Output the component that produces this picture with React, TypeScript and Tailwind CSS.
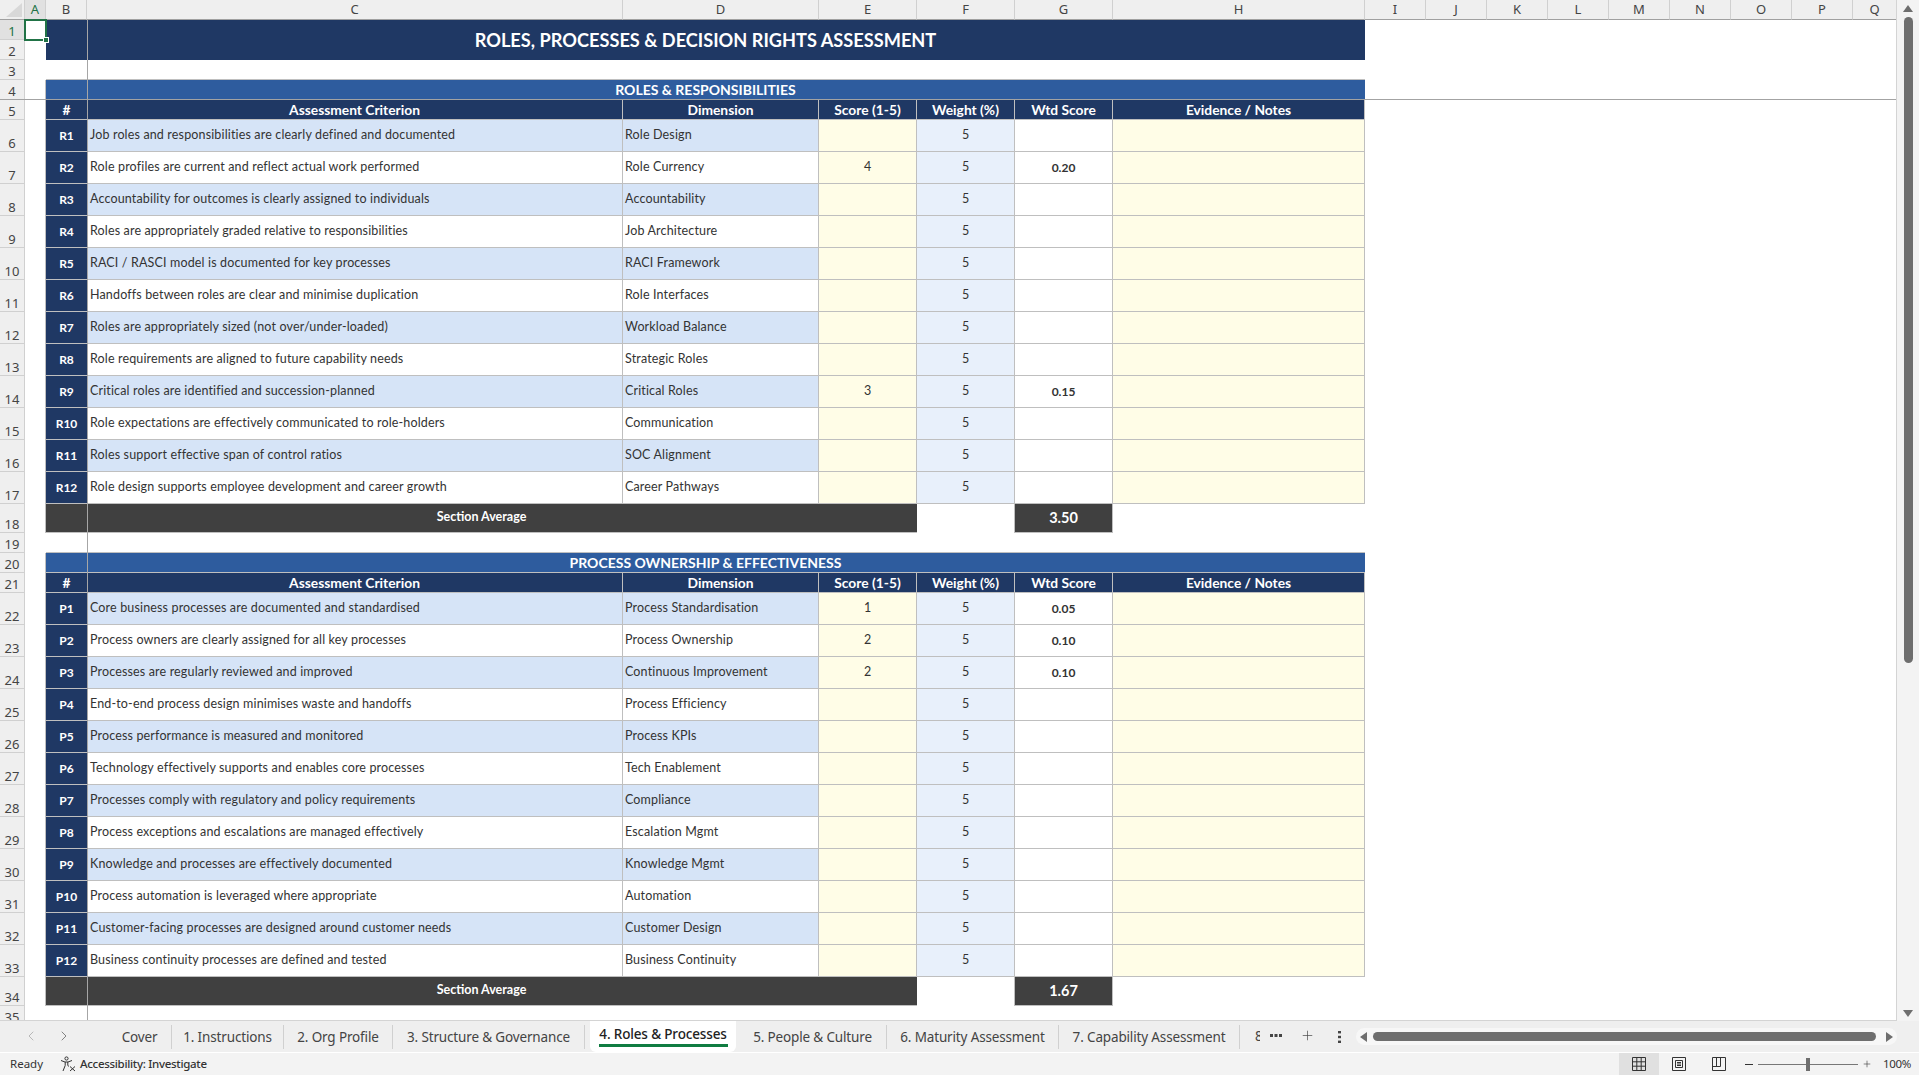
import { ChevronLeft, ChevronRight, Plus } from "lucide-react";

type Item = { id: string; criterion: string; dim: string; score?: number; wtd?: string };

const roles: Item[] = [
  { id: "R1", criterion: "Job roles and responsibilities are clearly defined and documented", dim: "Role Design" },
  { id: "R2", criterion: "Role profiles are current and reflect actual work performed", dim: "Role Currency", score: 4, wtd: "0.20" },
  { id: "R3", criterion: "Accountability for outcomes is clearly assigned to individuals", dim: "Accountability" },
  { id: "R4", criterion: "Roles are appropriately graded relative to responsibilities", dim: "Job Architecture" },
  { id: "R5", criterion: "RACI / RASCI model is documented for key processes", dim: "RACI Framework" },
  { id: "R6", criterion: "Handoffs between roles are clear and minimise duplication", dim: "Role Interfaces" },
  { id: "R7", criterion: "Roles are appropriately sized (not over/under-loaded)", dim: "Workload Balance" },
  { id: "R8", criterion: "Role requirements are aligned to future capability needs", dim: "Strategic Roles" },
  { id: "R9", criterion: "Critical roles are identified and succession-planned", dim: "Critical Roles", score: 3, wtd: "0.15" },
  { id: "R10", criterion: "Role expectations are effectively communicated to role-holders", dim: "Communication" },
  { id: "R11", criterion: "Roles support effective span of control ratios", dim: "SOC Alignment" },
  { id: "R12", criterion: "Role design supports employee development and career growth", dim: "Career Pathways" },
];

const processes: Item[] = [
  { id: "P1", criterion: "Core business processes are documented and standardised", dim: "Process Standardisation", score: 1, wtd: "0.05" },
  { id: "P2", criterion: "Process owners are clearly assigned for all key processes", dim: "Process Ownership", score: 2, wtd: "0.10" },
  { id: "P3", criterion: "Processes are regularly reviewed and improved", dim: "Continuous Improvement", score: 2, wtd: "0.10" },
  { id: "P4", criterion: "End-to-end process design minimises waste and handoffs", dim: "Process Efficiency" },
  { id: "P5", criterion: "Process performance is measured and monitored", dim: "Process KPIs" },
  { id: "P6", criterion: "Technology effectively supports and enables core processes", dim: "Tech Enablement" },
  { id: "P7", criterion: "Processes comply with regulatory and policy requirements", dim: "Compliance" },
  { id: "P8", criterion: "Process exceptions and escalations are managed effectively", dim: "Escalation Mgmt" },
  { id: "P9", criterion: "Knowledge and processes are effectively documented", dim: "Knowledge Mgmt" },
  { id: "P10", criterion: "Process automation is leveraged where appropriate", dim: "Automation" },
  { id: "P11", criterion: "Customer-facing processes are designed around customer needs", dim: "Customer Design" },
  { id: "P12", criterion: "Business continuity processes are defined and tested", dim: "Business Continuity" },
];

const headers = ["Assessment Criterion", "Dimension", "Score (1-5)", "Weight (%)", "Wtd Score", "Evidence / Notes"];

const tabs = [
  { label: "Cover", w: "w-[64px]" },
  { label: "1. Instructions", w: "w-[112px]" },
  { label: "2. Org Profile", w: "w-[109px]" },
  { label: "3. Structure & Governance", w: "w-[192px]" },
];
const tabsAfter = [
  { label: "5. People & Culture", w: "w-[148px]" },
  { label: "6. Maturity Assessment", w: "w-[172px]" },
  { label: "7. Capability Assessment", w: "w-[181px]" },
];

function RowHead({ n, h, active }: { n: number; h: string; active?: boolean }) {
  return (
    <div className={`${h} ${active ? "bg-[#e1e1e1] text-[#217346]" : "bg-[#efefef] text-[#444]"} flex items-end justify-center border-r border-b border-[#d0d0d0] text-[13px] leading-[16px] [font-family:'Noto_Sans',sans-serif] overflow-hidden`}>
      {n}
    </div>
  );
}

function Spacer({ n }: { n: number }) {
  return (
    <>
      <RowHead n={n} h="h-[20px]" />
      <div className="h-[20px]" />
      <div className="col-span-7 border-b border-[#bfbfbf]" />
      <div />
    </>
  );
}

function SectionTitle({ n, title }: { n: number; title: string }) {
  return (
    <>
      <RowHead n={n} h="h-[20px]" />
      <div className="h-[20px] border-r border-[#bfbfbf]" />
      <div className="col-span-7 bg-[#2e5c9e] flex items-center justify-center border-b border-[#bfbfbf] text-white font-bold text-[14px] leading-none">{title}</div>
      <div />
    </>
  );
}

function HeadRow({ n }: { n: number }) {
  return (
    <>
      <RowHead n={n} h="h-[20px]" />
      <div className="h-[20px] border-r border-[#bfbfbf]" />
      <div className="bg-[#1f3864] flex items-center justify-center border-b border-[#bfbfbf] text-white font-bold text-[13.8px] leading-none">#</div>
      {headers.map((t) => (
        <div key={t} className="bg-[#1f3864] flex items-center justify-center border-r border-b border-[#bfbfbf] text-white font-bold text-[13.8px] leading-none">{t}</div>
      ))}
      <div />
    </>
  );
}

function DataRow({ n, item, shade }: { n: number; item: Item; shade: boolean }) {
  const bg = shade ? "bg-[#d6e4f7]" : "bg-white";
  const cell = "flex items-center border-r border-b border-[#bfbfbf] text-[12.5px] leading-none text-[#333]";
  return (
    <>
      <RowHead n={n} h="h-[32px]" />
      <div className="h-[32px] border-r border-[#bfbfbf]" />
      <div className="bg-[#1f3864] flex items-center justify-center border-b border-[#bfbfbf] text-white font-bold text-[12px] leading-none">{item.id}</div>
      <div className={`${cell} ${bg} pl-[3px] whitespace-nowrap overflow-hidden tracking-[0.15px]`}>{item.criterion}</div>
      <div className={`${cell} ${bg} pl-[2px] whitespace-nowrap overflow-hidden tracking-[0.15px]`}>{item.dim}</div>
      <div className={`${cell} bg-[#fffde7] justify-center`}>{item.score}</div>
      <div className={`${cell} bg-[#e8f0fb] justify-center`}>5</div>
      <div className={`${cell} bg-white justify-center font-bold !text-[12px]`}>{item.wtd}</div>
      <div className={`${cell} bg-[#fffde7]`} />
      <div />
    </>
  );
}

function AverageRow({ n, value }: { n: number; value: string }) {
  return (
    <>
      <RowHead n={n} h="h-[29px]" />
      <div className="h-[29px] border-r border-[#bfbfbf]" />
      <div className="col-span-4 bg-[#404040] flex items-center justify-center border-b border-[#bfbfbf] pb-[2px] text-white font-bold text-[12.5px] leading-none">Section Average</div>
      <div className="bg-white border-r border-[#bfbfbf]" />
      <div className="bg-[#404040] flex items-center justify-center border-r border-b border-[#bfbfbf] text-white font-bold text-[14.5px] leading-none">{value}</div>
      <div className="col-span-2" />
    </>
  );
}

function AccessIcon() {
  return (
    <svg width="16" height="16" viewBox="0 0 16 16" fill="none" stroke="#333" strokeWidth="1">
      <circle cx="6.5" cy="2.5" r="1.6" />
      <path d="M1 4.5l4 1.5h3l4-1.5M5.2 6v3.5L3 15M7.8 6v3L8.5 10.5" />
      <path d="M10 10.5l5 4.5M15 10.5l-5 4.5" />
    </svg>
  );
}

export default function App() {
  const colHead = "flex items-center justify-center border-r border-b border-[#d0d0d0] border-b-[#a0a0a0] bg-[#efefef] text-[#444] h-[20px] pt-[1px]";
  return (
    <div className="w-[1919px] h-[1075px] overflow-hidden flex flex-col bg-[#f3f3f3] [font-family:Lato,sans-serif]">
      <div className="h-[1021px] flex">
        {/* sheet */}
        <div className="relative w-[1897px] h-[1021px] overflow-hidden bg-white border-r border-b border-[#d4d4d4]">
          <div className="grid grid-cols-[25px_21px_41px_536px_196px_98px_98px_98px_252px_1fr] text-[#333]">
            <div className={`${colHead} relative`}>
              <svg className="absolute right-[2px] bottom-[2px]" width="16" height="14" viewBox="0 0 16 14"><polygon points="16,0 16,14 0,14" fill="#d8d8d8" /></svg>
            </div>
            {["A", "B", "C", "D", "E", "F", "G", "H"].map((c) => (
              <div key={c} className={`${colHead} text-[13px] [font-family:'Noto_Sans',sans-serif] ${c === "A" ? "!bg-[#e1e1e1] !text-[#217346]" : ""}`}>{c}</div>
            ))}
            <div className="flex text-[13px] [font-family:'Noto_Sans',sans-serif]">
              {["I", "J", "K", "L", "M", "N", "O", "P"].map((c) => (
                <div key={c} className={`${colHead} w-[61px] shrink-0`}>{c}</div>
              ))}
              <div className={`${colHead} flex-1 border-r-0`}>Q</div>
            </div>

            {/* rows 1-2, merged title */}
            <RowHead n={1} h="h-[20px]" active />
            <div className="relative h-[20px]">
              <div className="absolute left-[-1px] top-[-1px] w-[23px] h-[22px] border-2 border-[#217346]" />
              <div className="absolute right-[-3px] bottom-[-3px] w-[6px] h-[6px] bg-[#217346] border border-white" />
            </div>
            <div className="col-span-7 row-span-2 bg-[#1f3864] flex items-center justify-center text-white font-bold text-[18.2px] leading-none">
              ROLES, PROCESSES &amp; DECISION RIGHTS ASSESSMENT
            </div>
            <div className="row-span-2" />
            <RowHead n={2} h="h-[20px]" />
            <div className="h-[20px]" />

            <Spacer n={3} />
            <SectionTitle n={4} title="ROLES & RESPONSIBILITIES" />
            <HeadRow n={5} />
            {roles.map((r, i) => (
              <DataRow key={r.id} n={6 + i} item={r} shade={i % 2 === 0} />
            ))}
            <AverageRow n={18} value="3.50" />
            <Spacer n={19} />
            <SectionTitle n={20} title="PROCESS OWNERSHIP & EFFECTIVENESS" />
            <HeadRow n={21} />
            {processes.map((r, i) => (
              <DataRow key={r.id} n={22 + i} item={r} shade={i % 2 === 0} />
            ))}
            <AverageRow n={34} value="1.67" />
            <RowHead n={35} h="h-[20px]" />
          </div>
          {/* freeze panes */}
          <div className="absolute left-[87px] top-[20px] bottom-0 w-px bg-[#a6a6a6]" />
          <div className="absolute left-0 right-0 top-[99px] h-px bg-[#a3a3a3]" />
        </div>
        {/* vertical scrollbar */}
        <div className="flex-1 bg-[#f3f3f3] flex flex-col items-center pt-[5px] pb-[4px]">
          <svg width="10" height="7" viewBox="0 0 10 7"><polygon points="5,0 10,7 0,7" fill="#6e6e6e" /></svg>
          <div className="w-[9px] h-[646px] mt-[5px] rounded-full bg-[#6e6e6e]" />
          <div className="flex-1" />
          <svg width="10" height="7" viewBox="0 0 10 7"><polygon points="0,0 10,0 5,7" fill="#6e6e6e" /></svg>
        </div>
      </div>

      {/* tab bar */}
      <div className="h-[32px] flex items-stretch bg-[#efefef] border-b border-white text-[13.5px] text-[#444] [font-family:'Noto_Sans',sans-serif] tracking-[-0.15px]">
        <div className="w-[108px] flex items-center pl-[23px] gap-[17px] pb-[1px] text-[#666]">
          <ChevronLeft size={16} strokeWidth={1.2} className="text-[#aaa]" />
          <ChevronRight size={16} strokeWidth={1.2} />
        </div>
        {tabs.map((t) => (
          <div key={t.label} className={`${t.w} flex items-center justify-center`}>
            <span className="w-full text-center border-r border-[#d0d0d0] leading-[24px]">{t.label}</span>
          </div>
        ))}
        <div className="ml-[5px] w-[146px] bg-white rounded-b-[6px] -mt-px flex flex-col items-center pt-[4px]">
          <span className="text-[#222] leading-[20px] font-medium">4. Roles &amp; Processes</span>
          <div className="w-[129px] h-[3px] bg-[#107c41]" />
        </div>
        <div className="w-[3px]" />
        {tabsAfter.map((t) => (
          <div key={t.label} className={`${t.w} flex items-center justify-center`}>
            <span className="w-full text-center border-r border-[#d0d0d0] leading-[24px]">{t.label}</span>
          </div>
        ))}
        <div className="w-[20px] overflow-hidden flex items-center pl-[15px]">8.</div>
        <div className="w-[32px] flex items-center justify-center mb-[2px]">
          <svg width="12" height="3" viewBox="0 0 12 3" fill="#444"><rect width="3" height="3" /><rect x="4.5" width="3" height="3" /><rect x="9" width="3" height="3" /></svg>
        </div>
        <div className="w-[30px] flex items-center justify-center mb-[2px]"><Plus size={15} strokeWidth={1.1} /></div>
        <div className="w-[34px] flex items-center justify-center">
          <svg width="3" height="12" viewBox="0 0 3 12" fill="#444"><rect y="0" width="3" height="2.4" /><rect y="4.8" width="3" height="2.4" /><rect y="9.6" width="3" height="2.4" /></svg>
        </div>
        <div className="w-[541px] h-[17px] mt-[7px] rounded-full bg-[#f7f7f7] flex items-center px-[4px]">
          <svg width="7" height="10" viewBox="0 0 7 10"><polygon points="7,0 7,10 0,5" fill="#6e6e6e" /></svg>
          <div className="flex-1 h-[9px] rounded-full bg-[#6e6e6e] ml-[6px] mr-[10px]" />
          <svg width="7" height="10" viewBox="0 0 7 10"><polygon points="0,0 7,5 0,10" fill="#6e6e6e" /></svg>
        </div>
      </div>

      {/* status bar */}
      <div className="flex-1 flex items-center text-[11.5px] text-[#333] [font-family:'Noto_Sans',sans-serif]">
        <span className="ml-[10px] w-[50px]">Ready</span>
        <AccessIcon />
        <span className="ml-[4px] font-medium tracking-[-0.3px]">Accessibility: Investigate</span>
        <div className="flex-1" />
        <div className="w-[40px] h-full bg-[#e0e0e0] flex items-center justify-center">
          <svg width="14" height="14" viewBox="0 0 14 14" fill="none" stroke="#333"><path d="M.5.5h13v13H.5zM.5 4.8h13M.5 9.2h13M4.8.5v13M9.2.5v13" /></svg>
        </div>
        <div className="w-[40px] flex items-center justify-center">
          <svg width="14" height="14" viewBox="0 0 14 14" fill="none" stroke="#333"><path d="M.5.5h13v13H.5zM3.5 3.5h7v7h-7zM5 5.5h4M5 7h4M5 8.5h4" /></svg>
        </div>
        <div className="w-[40px] flex items-center justify-center">
          <svg width="14" height="14" viewBox="0 0 14 14" fill="none" stroke="#333"><path d="M.5.5h13v13H.5zM.5 9.5h8V.5M4.5.5v9" /></svg>
        </div>
        <div className="ml-[6px] w-[8px] h-px bg-[#333]" />
        <div className="relative ml-[5px] w-[100px] h-px bg-[#777]">
          <div className="absolute left-[48px] top-[-6px] w-[4px] h-[13px] bg-[#6e6e6e]" />
        </div>
        <Plus size={10} strokeWidth={1.4} className="ml-[4px]" />
        <span className="ml-[11px] mr-[10px] w-[26px] tracking-[-0.3px]">100%</span>
      </div>
    </div>
  );
}
